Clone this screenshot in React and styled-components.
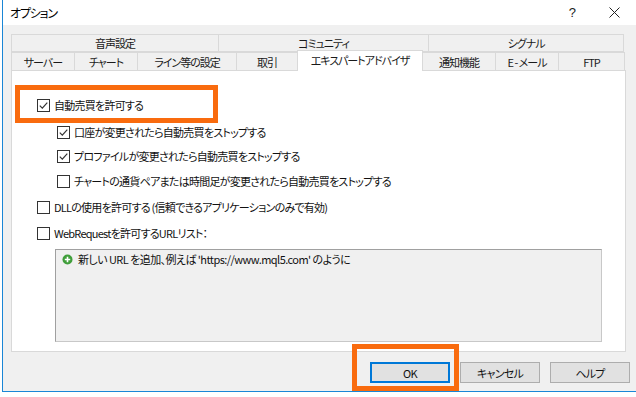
import React from "react";
import styled, { createGlobalStyle } from "styled-components";

const Global = createGlobalStyle`
  html, body { margin: 0; padding: 0; background: #ffffff; }
  body {
    font-family: "Noto Sans CJK JP", "Noto Sans", sans-serif;
    font-size: 11px;
    color: #111;
    font-feature-settings: "palt";
    letter-spacing: -0.75px;
  }
`;

const Window = styled.div`
  position: relative;
  margin-left: 2px;
  width: 634px;
  height: 391px;
  border-left: 1px solid #1a86d6;
  border-bottom: 1px solid #1a86d6;
  display: flex;
  flex-direction: column;
  background: #f0f0f0;
  overflow: hidden;
`;

const TitleBar = styled.div`
  height: 25px;
  flex: none;
  background: #ffffff;
  display: flex;
  align-items: center;
  padding-left: 7px;
`;

const Title = styled.div`
  flex: 1;
  font-size: 12px;
  letter-spacing: -1.2px;
  color: #000;
`;

const CaptionButton = styled.div`
  width: ${(p) => p.$w}px;
  height: 25px;
  display: flex;
  align-items: center;
  justify-content: center;
  font-family: "Liberation Sans", sans-serif;
  font-size: 13px;
  color: #222;
`;

const Body = styled.div`
  flex: 1;
  display: flex;
  flex-direction: column;
  padding: 9px 10px 8px 8px;
`;

const TabRow = styled.div`
  display: flex;
  align-items: flex-end;
  height: 18px;
`;

const Tab = styled.div`
  width: ${(p) => p.$w}px;
  height: 18px;
  box-sizing: border-box;
  border: 1px solid #d9d9d9;
  border-bottom: none;
  margin-right: -1px;
  background: #f0f0f0;
  display: flex;
  align-items: center;
  justify-content: center;
  font-size: 11px;
  letter-spacing: -1px;
  color: #1a1a1a;
  white-space: nowrap;
`;

const TopTab = styled(Tab)`
  border-bottom: 1px solid #d9d9d9;
`;

const ActiveTab = styled(Tab)`
  height: 21px;
  margin-bottom: -1px;
  background: #ffffff;
  position: relative;
  z-index: 1;
  padding-bottom: 2px;
`;

const Panel = styled.div`
  width: 615px;
  height: 282px;
  box-sizing: border-box;
  background: #ffffff;
  border: 1px solid #d9d9d9;
  padding: 22px 0 0 25px;
  display: flex;
  flex-direction: column;
`;

const Row = styled.label`
  height: 24px;
  flex: none;
  display: flex;
  align-items: center;
  gap: 4px;
  margin-left: ${(p) => p.$indent || 0}px;
  margin-top: ${(p) => p.$mt || 0}px;
  font-size: 11px;
  color: #111;
  white-space: nowrap;
`;

const Box = styled.span`
  width: 13px;
  height: 13px;
  box-sizing: border-box;
  border: 1px solid #333;
  background: #fff;
  flex: none;
  display: flex;
  align-items: center;
  justify-content: center;
`;

const ListBox = styled.div`
  margin: 4px 0 0 18px;
  width: 547px;
  height: 93px;
  box-sizing: border-box;
  background: #f0f0f0;
  border: 1px solid #a0a0a0;
  border-right-color: #c8c8c8;
  border-bottom-color: #c8c8c8;
  padding: 1px 0 0 6px;
`;

const ListItem = styled.div`
  height: 16px;
  display: flex;
  align-items: center;
  gap: 5px;
  font-size: 11px;
  letter-spacing: -0.55px;
  color: #111;
  white-space: nowrap;
`;

const ButtonBar = styled.div`
  display: flex;
  justify-content: flex-end;
  gap: 10px;
  margin-top: 10px;
  margin-right: -3px;
`;

const Button = styled.div`
  width: 80px;
  height: 21px;
  box-sizing: border-box;
  background: #e1e1e1;
  border: 1px solid ${(p) => (p.$default ? "#0078d7" : "#adadad")};
  box-shadow: ${(p) => (p.$default ? "inset 0 0 0 1px #0078d7" : "none")};
  display: flex;
  align-items: center;
  justify-content: center;
  font-size: 11px;
  color: #111;
`;

const Highlight = styled.div`
  position: absolute;
  left: ${(p) => p.$x}px;
  top: ${(p) => p.$y}px;
  width: ${(p) => p.$w}px;
  height: ${(p) => p.$h}px;
  box-sizing: border-box;
  border: 5px solid #f96b0e;
  pointer-events: none;
  z-index: 5;
`;

const Check = ({ on }) => (
  <Box>
    {on && (
      <svg width="11" height="11" viewBox="0 0 11 11">
        <path d="M1.8 5.6 L4.3 8.1 L9.3 2.6" fill="none" stroke="#333" strokeWidth="1.2" />
      </svg>
    )}
  </Box>
);

const AddIcon = () => (
  <svg width="11" height="11" viewBox="0 0 11 11">
    <circle cx="5.5" cy="5.5" r="5" fill="#3f9e3a" />
    <path d="M5.5 2.8 V8.2 M2.8 5.5 H8.2" stroke="#fff" strokeWidth="1.6" />
  </svg>
);

const topTabs = [
  ["音声設定", 208],
  ["コミュニティ", 211],
  ["シグナル", 196],
];

const bottomTabs = [
  ["サーバー", 64],
  ["チャート", 64],
  ["ライン等の設定", 100],
  ["取引", 62],
  ["エキスパートアドバイザ", 126, true],
  ["通知機能", 74],
  ["E - メール", 64],
  ["FTP", 67],
];

export default function App() {
  return (
    <>
      <Global />
      <Window>
        <TitleBar>
          <Title>オプション</Title>
          <CaptionButton $w={38}>?</CaptionButton>
          <CaptionButton $w={46}>
            <svg width="11" height="11" viewBox="0 0 11 11">
              <path d="M0.5 0.5 L10.5 10.5 M10.5 0.5 L0.5 10.5" stroke="#222" strokeWidth="1" />
            </svg>
          </CaptionButton>
        </TitleBar>
        <Body>
          <TabRow>
            {topTabs.map(([t, w]) => (
              <TopTab key={t} $w={w}>{t}</TopTab>
            ))}
          </TabRow>
          <TabRow>
            {bottomTabs.map(([t, w, active]) =>
              active ? (
                <ActiveTab key={t} $w={w}>{t}</ActiveTab>
              ) : (
                <Tab key={t} $w={w}>{t}</Tab>
              )
            )}
          </TabRow>
          <Panel>
            <Row>
              <Check on />
              自動売買を許可する
            </Row>
            <Row $indent={20} $mt={3}>
              <Check on />
              口座が変更されたら自動売買をストップする
            </Row>
            <Row $indent={20}>
              <Check on />
              プロファイルが変更されたら自動売買をストップする
            </Row>
            <Row $indent={20} $mt={1}>
              <Check />
              チャートの通貨ペアまたは時間足が変更されたら自動売買をストップする
            </Row>
            <Row $mt={2}>
              <Check />
              DLLの使用を許可する (信頼できるアプリケーションのみで有効)
            </Row>
            <Row $mt={2}>
              <Check />
              WebRequestを許可するURLリスト：
            </Row>
            <ListBox>
              <ListItem>
                <AddIcon />
                新しい URL を追加、例えば 'https://www.mql5.com' のように
              </ListItem>
            </ListBox>
          </Panel>
          <ButtonBar>
            <Button $default>OK</Button>
            <Button>キャンセル</Button>
            <Button>ヘルプ</Button>
          </ButtonBar>
        </Body>
        <Highlight $x={12} $y={85} $w={203} $h={38} />
        <Highlight $x={349} $y={344} $w={107} $h={47} />
      </Window>
    </>
  );
}
